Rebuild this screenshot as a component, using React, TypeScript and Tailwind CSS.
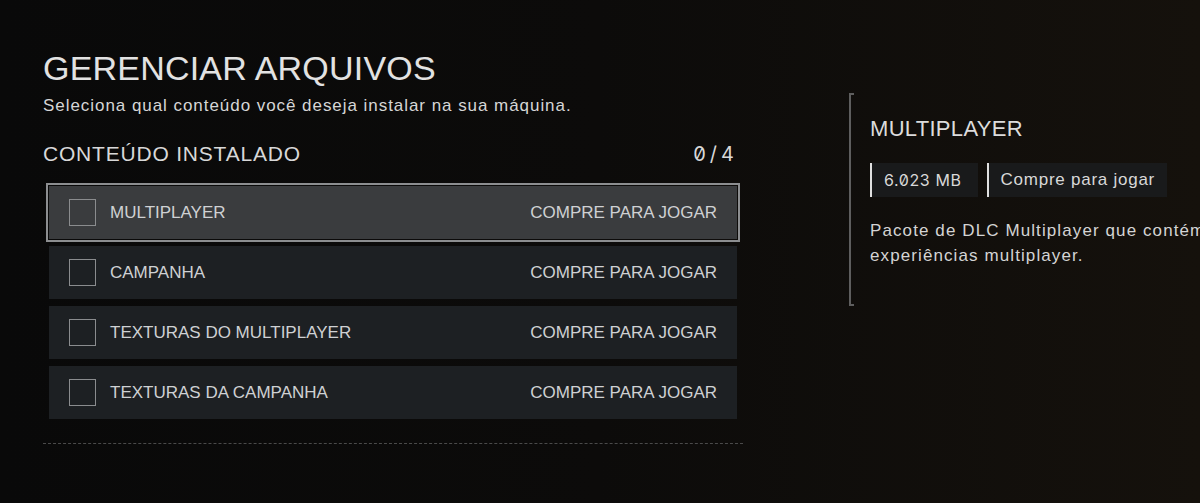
const rows = [
  { label: "MULTIPLAYER", selected: true },
  { label: "CAMPANHA", selected: false },
  { label: "TEXTURAS DO MULTIPLAYER", selected: false },
  { label: "TEXTURAS DA CAMPANHA", selected: false },
];

const font = { fontFamily: '"Liberation Sans", Arial, sans-serif' };
const digits = { fontFamily: 'Inter, "Liberation Sans", sans-serif' };

const Row = ({ label, selected }: { label: string; selected: boolean }) => (
  <div
    className={
      selected
        ? "flex h-[53px] items-center bg-[#3a3c3e] px-[20px] outline-2 outline-offset-[1px] outline-[#8c8e90]"
        : "flex h-[53px] items-center bg-[#1d2023] px-[20px]"
    }
  >
    <span className="h-[27px] w-[27px] shrink-0 border-[1.5px] border-[#8a8c8e]" />
    <span className="ml-[14px] text-[17px] text-[#cfd1d3]">{label}</span>
    <span className="ml-auto text-[17px] text-[#cfd1d3]">COMPRE PARA JOGAR</span>
  </div>
);

export default function App() {
  return (
    <div
      className="flex h-[503px] w-[1200px] overflow-hidden bg-linear-to-r from-[#090909] via-[#0c0b0a] to-[#15110c] text-[#dcdcdc]"
      style={font}
    >
      {/* left column */}
      <div className="ml-[43px] w-[700px] shrink-0 pt-[51px]">
        <h1 className="text-[34px] leading-none tracking-[0.2px] text-[#e2e2e2]">GERENCIAR ARQUIVOS</h1>
        <p className="mt-[12px] text-[17px] leading-none tracking-[0.95px] text-[#d6d6d6]">
          Seleciona qual conteúdo você deseja instalar na sua máquina.
        </p>

        <div className="mt-[29px] flex items-center pr-[5px]">
          <span className="text-[21px] leading-none tracking-[0.8px] text-[#d8d8d8]">CONTEÚDO INSTALADO</span>
          <span className="ml-auto text-[20px] leading-none tracking-[4px] text-[#d8d8d8] slashed-zero" style={digits}>
            0/4
          </span>
        </div>

        <div className="mt-[22px] flex flex-col gap-[7px] px-[6px]">
          {rows.map((r) => (
            <Row key={r.label} label={r.label} selected={r.selected} />
          ))}
        </div>

        <div className="mt-[24px] border-t border-dashed border-[#4a4a4a]" />
      </div>

      {/* right details panel */}
      <div className="relative ml-[106px] mt-[93px] h-[213px] shrink-0 border-l-2 border-[#5e5e5e] pl-[19px] pt-[25px]">
        <span className="absolute -left-[2px] top-0 h-[2px] w-[5px] bg-[#5e5e5e]" />
        <span className="absolute -left-[2px] bottom-0 h-[2px] w-[5px] bg-[#5e5e5e]" />
        <h2 className="text-[22px] leading-none tracking-[0.3px] text-[#dcdcdc]">MULTIPLAYER</h2>
        <div className="mt-[23px] flex gap-[9px]">
          <span
            className="flex h-[34px] items-center border-l-2 border-[#e0e0e0] bg-[#191a1b] pl-[12px] pr-[16px] text-[16px] tracking-[0.6px] text-[#d8d8d8] slashed-zero"
            style={digits}
          >
            6.023 MB
          </span>
          <span className="flex h-[34px] items-center border-l-2 border-[#e0e0e0] bg-[#191a1b] pl-[12px] pr-[12px] text-[17px] tracking-[0.75px] text-[#d8d8d8]">
            Compre para jogar
          </span>
        </div>
        <p className="mt-[21px] w-[400px] text-[17px] leading-[25px] tracking-[1.1px] text-[#d4d4d4]">
          Pacote de DLC Multiplayer que contém
          <br />
          experiências multiplayer.
        </p>
      </div>
    </div>
  );
}
